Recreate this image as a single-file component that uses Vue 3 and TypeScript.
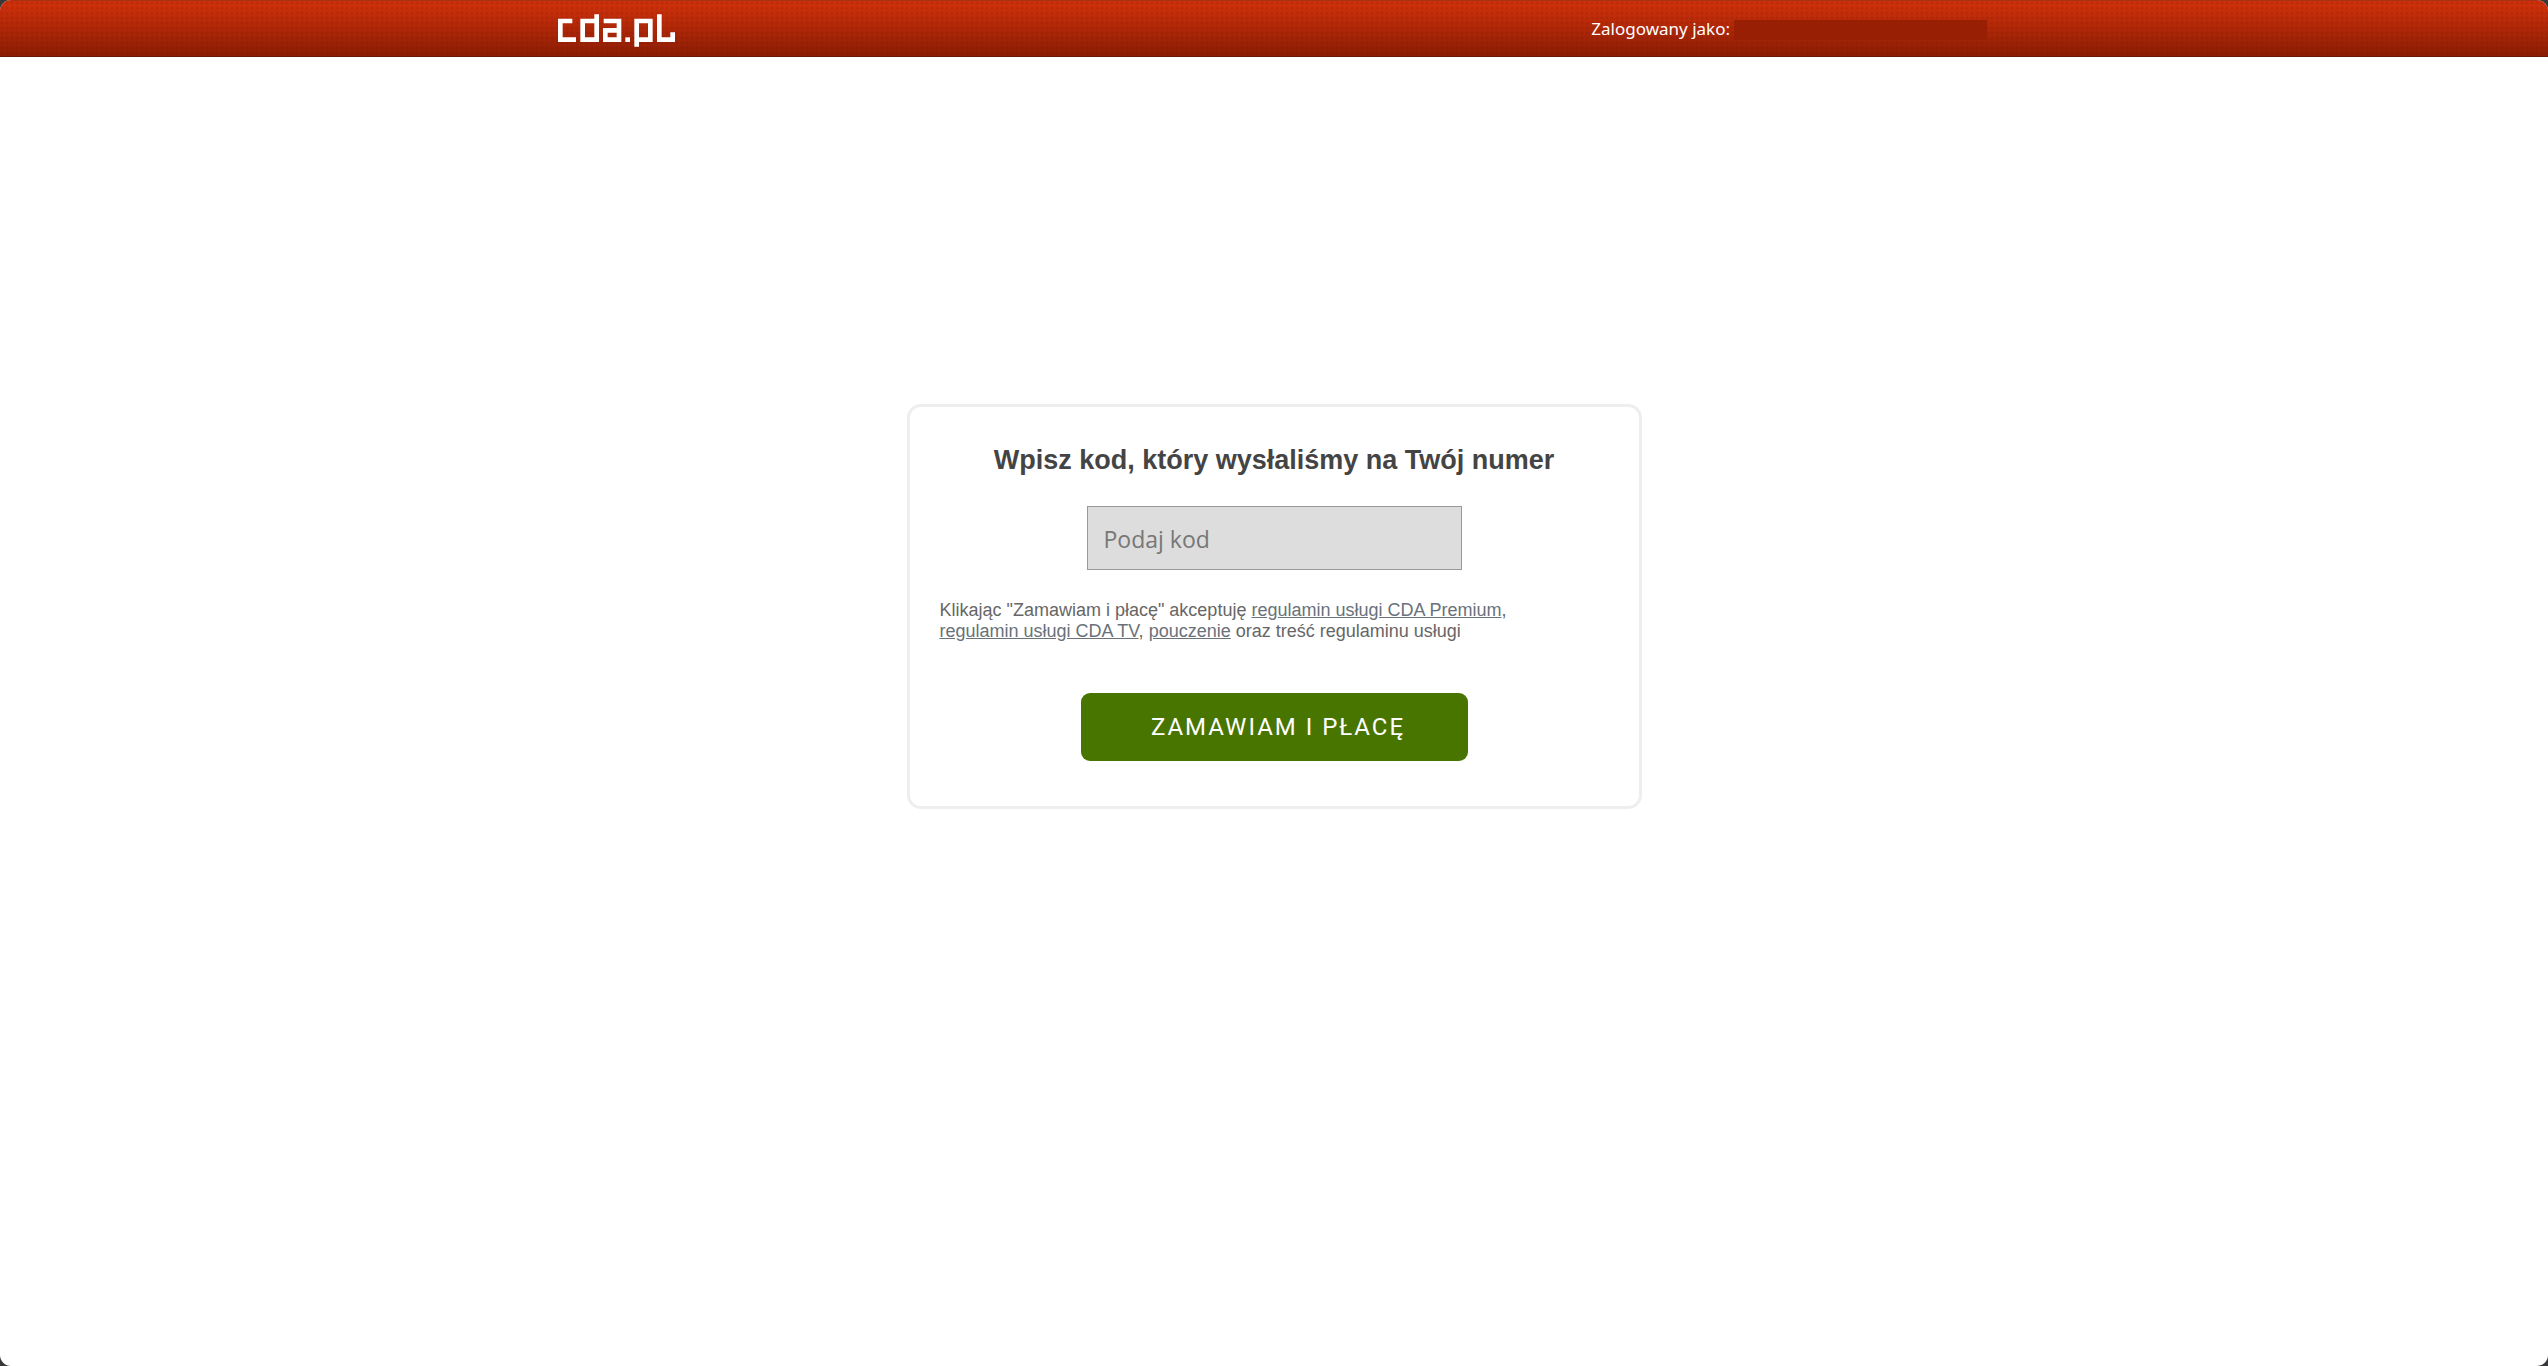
<script setup lang="ts">
import { ref } from 'vue'

const code = ref<string>('')
</script>

<template>
  <div class="page">
    <header class="topbar">
      <div class="topbar-inner">
        <a href="#" class="logo" aria-label="cda.pl">
          <svg width="119" height="33" viewBox="51 43 357 99" aria-hidden="true">
            <g fill="none" stroke="#fff" stroke-width="14" stroke-miterlimit="10">
              <path d="M97 64H61V120H108" />
              <path d="M170 44V120H128V64H170" />
              <path d="M191 64H237V120H196V92H237" />
              <path d="M256 120H270" />
              <path d="M290 141V64H331V120H290" />
              <path d="M358 44V120H398V98" />
            </g>
          </svg>
        </a>
        <div class="user">
          <span>Zalogowany jako:</span>
          <span class="user-name"></span>
        </div>
      </div>
    </header>

    <main class="content">
      <form class="card" @submit.prevent>
        <h1 class="title"><label for="code">Wpisz kod, który wysłaliśmy na Twój numer</label></h1>
        <input id="code" v-model="code" class="code" type="text" placeholder="Podaj kod" />
        <p class="terms">
          Klikając "Zamawiam i płacę" akceptuję <a href="#">regulamin usługi CDA Premium</a>,
          <a href="#">regulamin usługi CDA TV</a>, <a href="#">pouczenie</a> oraz treść regulaminu usługi
        </p>
        <button type="submit" class="submit">ZAMAWIAM I PŁACĘ</button>
      </form>
    </main>
  </div>
</template>

<style>
body {
  margin: 0;
  background: #38383a;
}
</style>

<style scoped>
.page {
  display: flex;
  flex-direction: column;
  min-height: 100vh;
  overflow: hidden;
  border-radius: 11px;
  background: #fff;
  font-family: "Liberation Sans", Arial, sans-serif;
}

.topbar {
  box-sizing: border-box;
  height: 57px;
  border-top: 1px solid #a83218;
  border-bottom: 1px solid #6b1a08;
  background:
    radial-gradient(circle at 2px 2px, rgba(90, 10, 0, 0.12) 1px, transparent 2px) 0 0 / 5px 5px,
    linear-gradient(#cc300b 10%, #8b1d03);
}

.topbar-inner {
  display: flex;
  align-items: center;
  justify-content: space-between;
  box-sizing: border-box;
  max-width: 1434px;
  height: 100%;
  margin: 0 auto;
  padding-right: 4px;
}

.logo {
  display: flex;
  padding-top: 4px;
}

.user {
  display: flex;
  align-items: flex-start;
  gap: 4px;
  padding-top: 3px;
  color: #fff;
  font-family: "Noto Sans", Tahoma, sans-serif;
  font-size: 17px;
  line-height: 18px;
}

.user-name {
  width: 253px;
  height: 20px;
  background: #981f04;
}

.content {
  display: flex;
  justify-content: center;
  padding: 347px 20px 40px;
}

.card {
  display: flex;
  flex-direction: column;
  align-items: center;
  box-sizing: border-box;
  width: 100%;
  max-width: 735px;
  padding: 37px 30px 45px;
  border: 3px solid #eee;
  border-radius: 14px;
}

.title {
  margin: 0 0 30px;
  color: #444;
  font-size: 27px;
  line-height: 32px;
  font-weight: 700;
}

.code {
  box-sizing: border-box;
  width: 375px;
  max-width: 100%;
  height: 64px;
  padding: 2px 16px 0;
  border: 1px solid #999;
  border-radius: 0;
  background: #ddd;
  color: #444;
  font-family: "Open Sans", "Segoe UI", sans-serif;
  font-size: 23px;
}

.code::placeholder {
  color: #777;
  opacity: 1;
}

.terms {
  align-self: stretch;
  max-width: 600px;
  margin: 30px 0 51px;
  color: #666;
  font-size: 18px;
  line-height: 21px;
}

.terms a {
  color: #69717a;
  text-decoration: underline;
}

.submit {
  box-sizing: border-box;
  width: 387px;
  max-width: 100%;
  height: 68px;
  padding: 0 0 0 8px;
  border: 0;
  border-radius: 9px;
  background: #487500;
  color: #fff;
  font-family: Roboto, sans-serif;
  font-size: 24px;
  letter-spacing: 2px;
}
</style>
